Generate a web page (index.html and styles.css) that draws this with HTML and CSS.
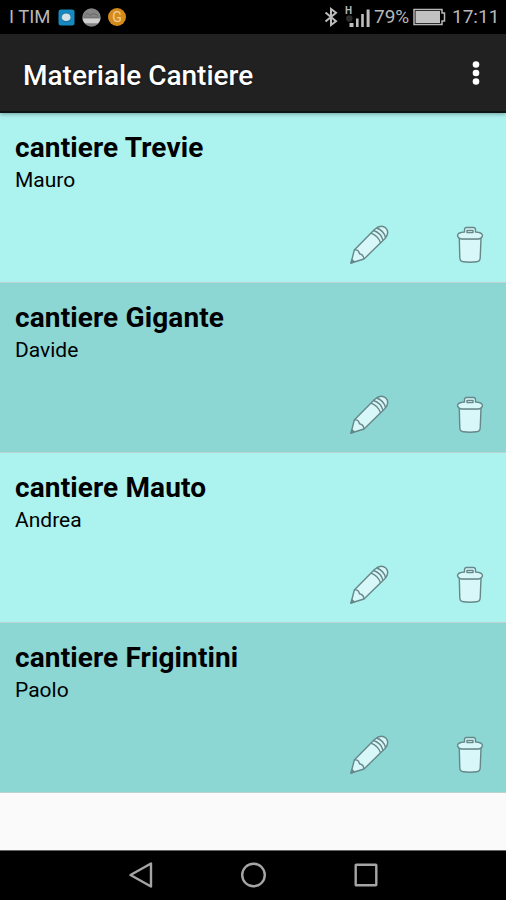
FILE: index.html
```html
<!DOCTYPE html>
<html lang="it">
<head>
    <meta charset="utf-8" />
    <title>Materiale Cantiere</title>
    <link rel="stylesheet" href="styles.css">
</head>
<body>
    <!-- icons shared by every row -->
    <svg class="sprite" width="0" height="0">
        <symbol id="pencil" viewBox="0 0 40 40">
            <path class="fill" d="M2 38 L5.3 25 L25.5 4.5 Q32 -1 36.8 3 Q41 7.5 36 13.5 L15 34 Z" />
            <path d="M5.3 25 Q9.5 24.2 10.5 28.8 Q14.5 29.5 15 34 M24.5 5.5 Q32 8 34 15.2 M27.5 3 Q34.8 5.5 36.5 12.5 M21.8 8.2 Q29 10.5 31.5 17.8" />
            <path class="tip" d="M2 38 L3 34.8 L5.2 36.8 Z" />
        </symbol>
        <symbol id="trash" viewBox="0 0 28 38">
            <path class="fill" d="M3.3 12.5 L3.8 32 Q4 35.5 7.5 35.8 Q14 36.6 20.5 35.8 Q24 35.5 24.2 32 L25 12.5 Z" />
            <path class="fill" d="M1.5 9.7 Q1.5 6.5 8.5 6 V3.6 Q8.7 1.5 10.5 1.5 H17.5 Q19.3 1.5 19.5 3.6 V6 Q26.5 6.5 26.5 9.7 Q26 12.6 22 13 H6 Q2 12.6 1.5 9.7 Z" />
            <path d="M11 6.5 V4.4 H17 V6.5 Z" />
        </symbol>
    </svg>

    <div class="status">
        <span class="carrier">I TIM</span>
        <svg class="app" width="17" height="17" viewBox="0 0 17 17">
            <rect x="0.5" y="0.5" width="16" height="16" rx="2.5" fill="#1689c0" />
            <path d="M4 5 Q8 2.5 12.5 5 V12 Q8 14.5 4 12 Z" fill="#1a72a4" />
            <ellipse cx="8.2" cy="8.3" rx="4.3" ry="3.8" fill="#d5e2e6" />
        </svg>
        <svg class="app" width="19" height="19" viewBox="0 0 19 19">
            <circle cx="9.5" cy="9.5" r="9.2" fill="#858585" />
            <path d="M0.5 10.5 H18.5 Q17.8 13.5 16 15.3 H3 Q1 13 0.5 10.5 Z" fill="#d0d0d0" />
            <path d="M3 7.5 Q6 4 8 7.5 Q12 3.5 16 8" fill="none" stroke="#666" />
            <path d="M1.5 9.3 H17.5" stroke="#707070" />
        </svg>
        <span class="coin">G</span>
        <svg class="bluetooth" width="15" height="20" viewBox="0 0 15 20">
            <path d="M1.5 5.5 L12 14.2 L7 18 V2 L12 5.8 L1.5 14.5" />
        </svg>
        <div class="signal">
            <span>H</span>
            <svg width="26" height="22" viewBox="0 0 26 22">
                <circle cx="4.3" cy="12.5" r="3.2" fill="#2d2d2d" />
                <path d="M4.5 17 H8.5 V21 H4.5 Z M11 12.5 H13.6 V21 H11 Z M16.2 8 H18.8 V21 H16.2 Z M21.6 3.5 H24.6 V21 H21.6 Z" fill="#bdbdbd" />
            </svg>
        </div>
        <span class="percent">79%</span>
        <svg class="battery" width="34" height="18" viewBox="0 0 34 18">
            <path d="M1 1.5 H29 V5 H31.5 V13 H29 V16.5 H1 Z" fill="none" stroke="#b8b8b8" stroke-width="1.5" />
            <rect x="2.5" y="3" width="24.5" height="12" fill="#c2c2c2" />
        </svg>
        <span class="clock">17:11</span>
    </div>

    <div class="toolbar">
        <h1>Materiale Cantiere</h1>
        <svg width="12" height="28" viewBox="0 0 12 28">
            <circle cx="6" cy="5.5" r="3.3" />
            <circle cx="6" cy="14" r="3.3" />
            <circle cx="6" cy="22.5" r="3.3" />
        </svg>
    </div>

    <div class="list">
        <div class="row">
            <h2>cantiere Trevie</h2>
            <p>Mauro</p>
            <div class="actions">
                <svg class="pencil"><use href="#pencil" /></svg>
                <svg class="trash"><use href="#trash" /></svg>
            </div>
        </div>
        <div class="row">
            <h2>cantiere Gigante</h2>
            <p>Davide</p>
            <div class="actions">
                <svg class="pencil"><use href="#pencil" /></svg>
                <svg class="trash"><use href="#trash" /></svg>
            </div>
        </div>
        <div class="row">
            <h2>cantiere Mauto</h2>
            <p>Andrea</p>
            <div class="actions">
                <svg class="pencil"><use href="#pencil" /></svg>
                <svg class="trash"><use href="#trash" /></svg>
            </div>
        </div>
        <div class="row">
            <h2>cantiere Frigintini</h2>
            <p>Paolo</p>
            <div class="actions">
                <svg class="pencil"><use href="#pencil" /></svg>
                <svg class="trash"><use href="#trash" /></svg>
            </div>
        </div>
    </div>

    <div class="navbar">
        <svg width="28" height="28" viewBox="0 0 28 28"><path d="M4.5 14 L25 2.5 V25.5 Z" /></svg>
        <svg width="28" height="28" viewBox="0 0 28 28"><circle cx="14.5" cy="14" r="11.3" /></svg>
        <svg width="28" height="28" viewBox="0 0 28 28"><rect x="3.7" y="3.7" width="20.6" height="20.6" rx="0.5" /></svg>
    </div>
</body>
</html>
```

FILE: styles.css
```css
body {
    display: flex;
    flex-direction: column;
    width: 506px;
    height: 900px;
    margin: 0;
    overflow: hidden;
    background-color: #fafafa;
    color: #000;
    font-family: Roboto, "Liberation Sans", sans-serif;
}

h1, h2, p {
    margin: 0;
}

svg {
    display: block;
    flex: none;
}

.sprite {
    position: absolute;
}

/* Status bar */
.status {
    display: flex;
    align-items: center;
    box-sizing: border-box;
    height: 34px;
    padding-left: 9px;
    background-color: #000;
    color: #b8b8b8;
    font-size: 19px;
    line-height: 36px;
    white-space: nowrap;
}

.carrier {
    width: 49px;
    font-size: 18.5px;
}

.app {
    margin-right: 7px;
}

.coin {
    width: 18px;
    height: 18px;
    border-radius: 50%;
    background-color: #d58a1c;
    color: #f0cf98;
    font-size: 14px;
    line-height: 18px;
    text-align: center;
}

.bluetooth {
    margin-left: 198px;
    fill: none;
    stroke: #bdbdbd;
    stroke-width: 2;
}

.signal {
    position: relative;
    margin-left: 6px;
}

.signal span {
    position: absolute;
    left: 0;
    top: 0;
    font-size: 10px;
    font-weight: bold;
    line-height: 10px;
}

.signal svg {
    margin-bottom: 1px;
}

.percent {
    width: 39px;
    margin-left: 3px;
}

.battery {
    margin: 0 5px 0 0;
}

/* Toolbar */
.toolbar {
    display: flex;
    align-items: center;
    justify-content: space-between;
    box-sizing: border-box;
    height: 79px;
    padding: 0 24px 0 23px;
    background-color: #212121;
    border-bottom: 2px solid #0b1515;
    color: #fff;
    z-index: 1;
    box-shadow: 0 1px 4px rgba(0, 0, 0, 0.35);
}

.toolbar h1 {
    padding-top: 6px;
    font-size: 28px;
    font-weight: 500;
    line-height: 32px;
    text-shadow: 0 0 2px #000;
}

.toolbar svg {
    margin-top: 1px;
    fill: #fff;
}

/* List */
.list {
    flex: 1;
}

.row {
    box-sizing: border-box;
    height: 170.1px;
    padding: 18px 22px 0 15px;
    border-bottom: 1px solid #bcd3d1;
    background-color: #acf2ef;
}

.row:nth-child(even) {
    background-color: #8cd6d4;
}

.row h2 {
    font-size: 28px;
    font-weight: bold;
    letter-spacing: 0.12px;
    line-height: 34px;
}

.row p {
    font-size: 21px;
    line-height: 31px;
}

.actions {
    display: flex;
    justify-content: flex-end;
    gap: 67px;
    padding-top: 29px;
}

.actions svg {
    fill: none;
    stroke: #66888a;
    stroke-width: 1.4;
    stroke-linejoin: round;
}

.pencil {
    width: 40px;
    height: 40px;
}

.trash {
    width: 28px;
    height: 38px;
    margin-top: 1px;
}

.fill {
    fill: #d8f7f8;
}

.tip {
    fill: #66888a;
}

/* Navigation keys */
.navbar {
    display: flex;
    align-items: center;
    justify-content: center;
    gap: 85px;
    box-sizing: border-box;
    height: 50px;
    padding-bottom: 1px;
    border-top: 1px solid #666;
    background-color: #000;
}

.navbar svg {
    fill: none;
    stroke: #a5a5a5;
    stroke-width: 2.4;
    stroke-linejoin: round;
}
```
